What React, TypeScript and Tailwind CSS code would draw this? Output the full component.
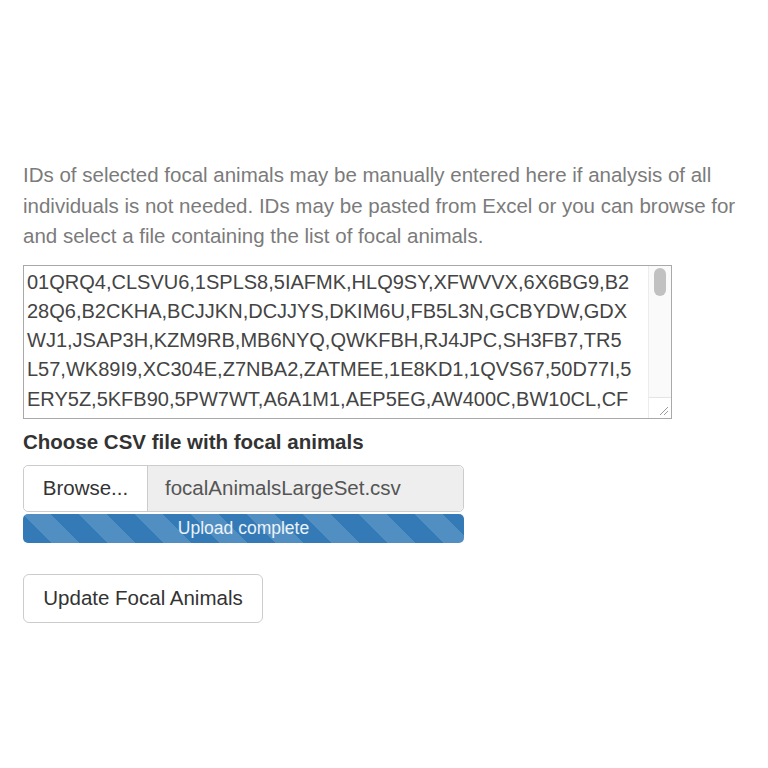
const lines = [
  "01QRQ4,CLSVU6,1SPLS8,5IAFMK,HLQ9SY,XFWVVX,6X6BG9,B2",
  "28Q6,B2CKHA,BCJJKN,DCJJYS,DKIM6U,FB5L3N,GCBYDW,GDX",
  "WJ1,JSAP3H,KZM9RB,MB6NYQ,QWKFBH,RJ4JPC,SH3FB7,TR5",
  "L57,WK89I9,XC304E,Z7NBA2,ZATMEE,1E8KD1,1QVS67,50D77I,5",
  "ERY5Z,5KFB90,5PW7WT,A6A1M1,AEP5EG,AW400C,BW10CL,CF",
];

export default function App() {
  return (
    <div className="min-h-[768px] w-[768px] bg-white px-[23px] pt-[160px] font-['Liberation_Sans',Arial,sans-serif]">
      <p className="text-[20.5px] leading-[30.5px] text-[#7b7b7b] whitespace-nowrap">
        IDs of selected focal animals may be manually entered here if analysis of all
        <br />
        individuals is not needed. IDs may be pasted from Excel or you can browse for
        <br />
        and select a file containing the list of focal animals.
      </p>

      <div className="mt-[13px] flex h-[154px] w-[649px] border border-[#a9a9a9] bg-white">
        <div className="flex-1 overflow-hidden pl-[3px] pt-[2px] text-[20px] leading-[29.25px] text-[#444] whitespace-pre">
          {lines.map((l) => (
            <div key={l}>{l}</div>
          ))}
        </div>
        <div className="flex w-[23px] flex-col border-l border-[#ececec] bg-[#fafafa]">
          <div className="flex flex-1 justify-center pt-[2px]">
            <div className="h-[28px] w-[12px] rounded-full bg-[#c1c1c1]" />
          </div>
          <div className="flex h-[21px] items-end justify-end border-t border-[#e4e4e4] bg-white p-[2px]">
            <svg width="12" height="12" viewBox="0 0 12 12">
              <path d="M11 3 L3 11 M11 7 L7 11" stroke="#9a9a9a" strokeWidth="1" fill="none" />
            </svg>
          </div>
        </div>
      </div>

      <label className="mt-[10px] block text-[20.5px] font-bold leading-[25px] text-[#333]">
        Choose CSV file with focal animals
      </label>

      <div className="mt-[11px] w-[441px]">
        <div className="flex h-[47px] rounded-[5px] border border-[#ccc] text-[20.5px]">
          <div className="flex w-[124px] items-center justify-center rounded-l-[5px] border-r border-[#ccc] bg-white text-[#333]">
            Browse...
          </div>
          <div className="flex flex-1 items-center rounded-r-[5px] bg-[#eee] pl-[17px] text-[#555]">
            focalAnimalsLargeSet.csv
          </div>
        </div>
        <div className="mt-[2px] flex h-[29px] items-center justify-center rounded-[5px] bg-[#337ab7] bg-[linear-gradient(45deg,rgba(255,255,255,.15)_25%,transparent_25%,transparent_50%,rgba(255,255,255,.15)_50%,rgba(255,255,255,.15)_75%,transparent_75%,transparent)] bg-[length:56px_56px] text-[17.5px] text-white/90">
          Upload complete
        </div>
      </div>

      <button className="mt-[31px] flex h-[49px] w-[240px] items-center justify-center rounded-[6px] border border-[#ccc] bg-white text-[20.5px] text-[#333]">
        Update Focal Animals
      </button>
    </div>
  );
}
